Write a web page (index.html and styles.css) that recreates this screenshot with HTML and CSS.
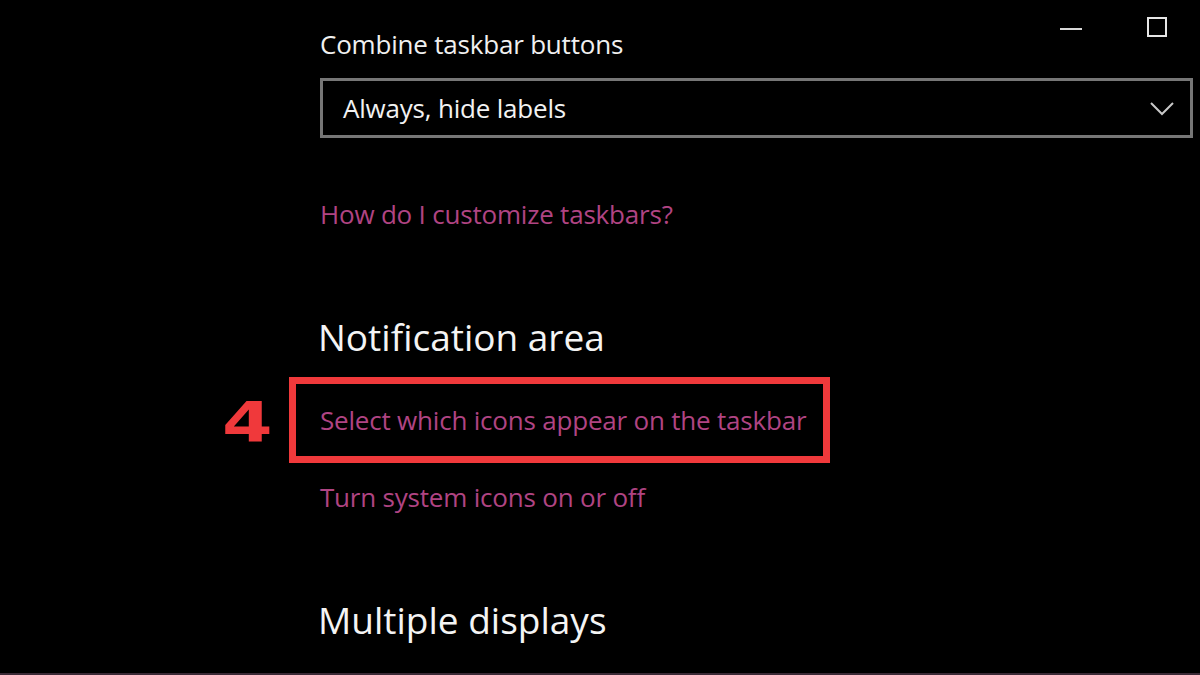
FILE: index.html
```html
<!DOCTYPE html>
<html lang="en">

<head>
    <meta charset="UTF-8">
    <meta name="viewport" content="width=device-width, initial-scale=1.0">
    <title>Taskbar settings</title>
    <link rel="stylesheet" href="styles.css">
</head>

<body>
    <div class="window-controls">
        <span class="win-btn minimize"></span>
        <span class="win-btn maximize"></span>
    </div>

    <div class="settings">
        <div class="field-label">Combine taskbar buttons</div>
        <div class="dropdown">
            <span>Always, hide labels</span>
            <svg class="chevron" width="24" height="14" viewBox="0 0 24 14">
                <path d="M1 1 L12 12 L23 1" fill="none" stroke="#c8c8c8" stroke-width="2"/>
            </svg>
        </div>

        <a class="link help-link" href="#">How do I customize taskbars?</a>

        <h2 class="section-title">Notification area</h2>

        <div class="highlight">
            <span class="step">4</span>
            <a class="link" href="#">Select which icons appear on the taskbar</a>
        </div>

        <a class="link system-link" href="#">Turn system icons on or off</a>

        <h2 class="section-title displays">Multiple displays</h2>
    </div>
</body>

</html>
```

FILE: styles.css
```css
html,
body {
    margin: 0;
    padding: 0;
    height: 100%;
}

body {
    background-color: #000;
    color: #f2f2f2;
    font-family: 'Open Sans', 'Noto Sans', sans-serif;
    overflow: hidden;
    box-sizing: border-box;
    border-bottom: 2px solid #3b2a36;
}

.window-controls {
    position: absolute;
    top: 0;
    right: 0;
    display: flex;
}

.win-btn {
    display: flex;
    align-items: center;
    justify-content: center;
    width: 86px;
    height: 58px;
}

.minimize::before {
    content: '';
    width: 22px;
    height: 2px;
    background-color: #d8d8d8;
}

.maximize::before {
    content: '';
    width: 16px;
    height: 16px;
    margin-bottom: 4px;
    border: 2px solid #e6e6e6;
}

.settings {
    display: flex;
    flex-direction: column;
    align-items: flex-start;
    width: 873px;
    padding: 28px 0 0 320px;
}

.field-label {
    font-size: 26px;
    line-height: 32px;
    letter-spacing: -0.2px;
    color: #f0f0f0;
}

.dropdown {
    box-sizing: border-box;
    width: 873px;
    height: 60px;
    margin-top: 18px;
    padding: 0 16px 0 20px;
    border: 3px solid #767676;
    display: flex;
    align-items: center;
    justify-content: space-between;
    font-size: 26px;
    letter-spacing: -0.2px;
    color: #f2f2f2;
}

.chevron {
    margin-top: 2px;
}

.link {
    color: #b04483;
    text-decoration: none;
    font-size: 26px;
    line-height: 32px;
    letter-spacing: -0.2px;
}

.help-link {
    margin-top: 60px;
}

.section-title {
    margin: 83px 0 0 -2px;
    font-size: 37px;
    font-weight: normal;
    line-height: 48px;
    color: #f4f4f4;
}

.highlight {
    position: relative;
    margin: 16px 0 0 -31px;
    padding: 20px 17px 20px 24px;
    border: 7px solid #f0393b;
}

.step {
    position: absolute;
    left: -74px;
    top: 6px;
    font-family: 'DejaVu Sans', sans-serif;
    font-weight: bold;
    font-size: 56px;
    line-height: 64px;
    color: #f0393b;
    transform: scaleX(1.3);
    transform-origin: left center;
}

.system-link {
    margin-top: 18px;
}

.displays {
    margin-top: 83px;
}
```
